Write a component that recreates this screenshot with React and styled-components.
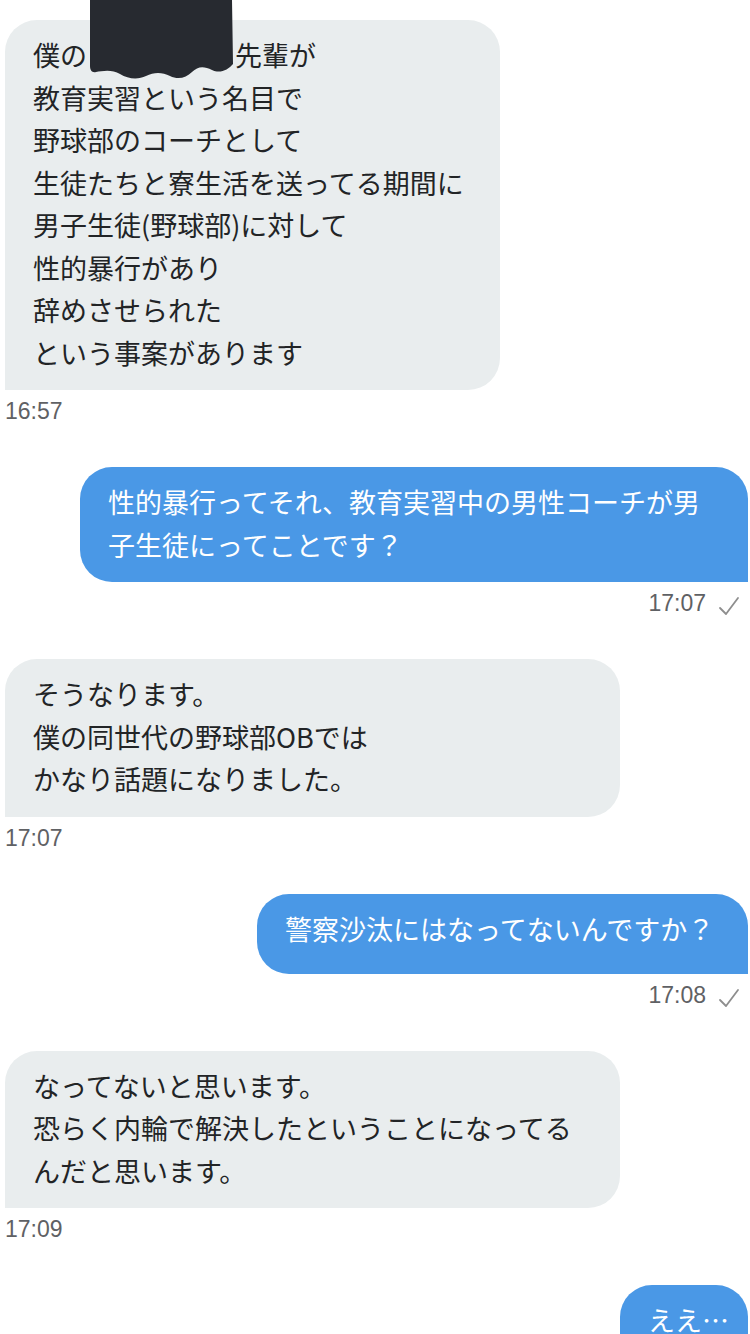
import React from "react";
import styled, { createGlobalStyle } from "styled-components";

const GlobalStyle = createGlobalStyle`
  html, body {
    margin: 0;
    padding: 0;
    background: #ffffff;
  }
  body {
    font-family: "Noto Sans CJK JP", "Noto Sans", sans-serif;
  }
`;

// a line given as an array has a blacked-out name between its two parts
const messages = [
  {
    id: 1,
    mine: false,
    width: 495,
    lines: [
      ["僕の", "先輩が"],
      "教育実習という名目で",
      "野球部のコーチとして",
      "生徒たちと寮生活を送ってる期間に",
      "男子生徒(野球部)に対して",
      "性的暴行があり",
      "辞めさせられた",
      "という事案があります",
    ],
    time: "16:57",
    redacted: true,
  },
  {
    id: 2,
    mine: true,
    width: 668,
    lines: ["性的暴行ってそれ、教育実習中の男性コーチが男", "子生徒にってことです？"],
    time: "17:07",
  },
  {
    id: 3,
    mine: false,
    width: 615,
    lines: ["そうなります。", "僕の同世代の野球部OBでは", "かなり話題になりました。"],
    time: "17:07",
  },
  {
    id: 4,
    mine: true,
    width: 491,
    lines: ["警察沙汰にはなってないんですか？"],
    time: "17:08",
  },
  {
    id: 5,
    mine: false,
    width: 615,
    lines: ["なってないと思います。", "恐らく内輪で解決したということになってる", "んだと思います。"],
    time: "17:09",
  },
  {
    id: 6,
    mine: true,
    width: 128,
    lines: ["ええ…"],
  },
];

const App = () => {
  return (
    <>
      <GlobalStyle />
      <Thread>
        {messages.map((m) => (
          <Group key={m.id} $mine={m.mine}>
            <Bubble $mine={m.mine} $width={m.width}>
              {m.lines.map((line, i) => (
                <Line key={i}>
                  {Array.isArray(line) ? (
                    <>
                      {line[0]}
                      <Hidden />
                      {line[1]}
                    </>
                  ) : (
                    line
                  )}
                </Line>
              ))}
              {m.redacted && <Redaction />}
            </Bubble>
            {m.time && (
              <Meta $mine={m.mine}>
                <Time>{m.time}</Time>
                {m.mine && <Check />}
              </Meta>
            )}
          </Group>
        ))}
      </Thread>
    </>
  );
};

const Redaction = () => (
  <Blot viewBox="0 0 146 80" aria-hidden="true">
    <path
      d="M2 0 H144 L145 64 C140 70 132 74 124 70 C116 66 110 66 104 72 C98 78 90 80 82 76 C74 72 66 72 58 76 C50 80 40 79 32 74 C24 69 14 71 8 72 C4 73 2 70 2 66 Z"
      fill="#272a30"
    />
  </Blot>
);

const Check = () => (
  <CheckIcon viewBox="0 0 22 20" aria-hidden="true">
    <path d="M2 12 L8 18 L20 2" fill="none" stroke="#8e8e8e" strokeWidth="1.8" strokeLinecap="round" strokeLinejoin="round" />
  </CheckIcon>
);

const Thread = styled.div`
  display: flex;
  flex-direction: column;
  gap: 42px;
  padding: 20px 2px 0 5px;
  height: 1334px;
  box-sizing: border-box;
  overflow: hidden;
`;

const Group = styled.div`
  display: flex;
  flex-direction: column;
  align-items: ${(p) => (p.$mine ? "flex-end" : "flex-start")};
  gap: 7px;
`;

const Bubble = styled.div`
  position: relative;
  box-sizing: border-box;
  width: ${(p) => p.$width}px;
  min-height: 80px;
  padding: 14px 20px 16px 28px;
  border-radius: ${(p) => (p.$mine ? "32px 32px 0 32px" : "32px 32px 32px 0")};
  background: ${(p) => (p.$mine ? "#4a98e6" : "#e9edee")};
  color: ${(p) => (p.$mine ? "#ffffff" : "#222426")};
  font-size: 27px;
  line-height: 42.5px;
  white-space: nowrap;
`;

const Line = styled.div``;

const Hidden = styled.span`
  display: inline-block;
  width: 148px;
`;

const Blot = styled.svg`
  position: absolute;
  left: 80px;
  top: -20px;
  width: 152px;
  height: 80px;
`;

const Meta = styled.div`
  display: flex;
  align-items: center;
  gap: 12px;
  padding-right: ${(p) => (p.$mine ? "8px" : "0")};
`;

const Time = styled.span`
  font-family: "Liberation Sans", Arial, sans-serif;
  font-size: 23px;
  line-height: 28px;
  color: #5f6164;
`;

const CheckIcon = styled.svg`
  width: 22px;
  height: 20px;
  margin-top: 6px;
`;

export default App;
